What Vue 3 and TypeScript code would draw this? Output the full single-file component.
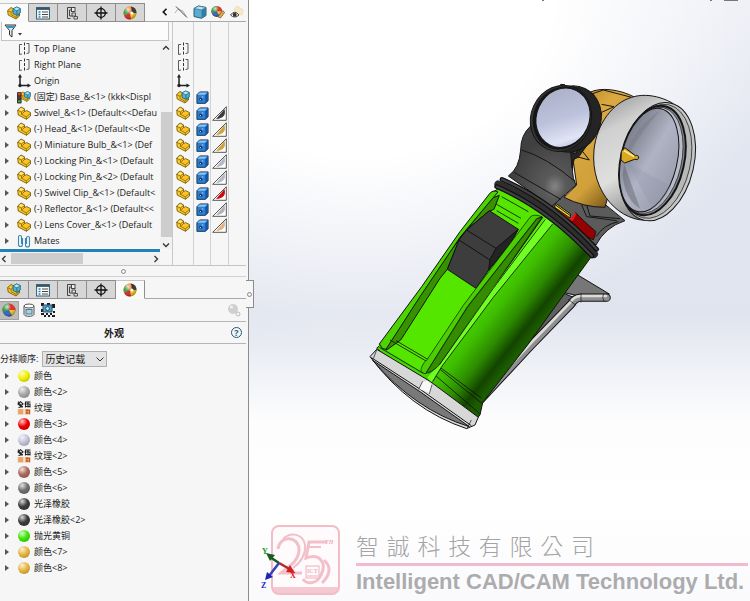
<script setup lang="ts">
import { ref } from 'vue'

interface FeatureRow {
  label: string
  icon: string
  expand: boolean
  display: string
  swatch?: string
}

interface Appearance {
  label: string
  color?: string
}

const tabs = [
  { id: 'assembly', label: 'FeatureManager' },
  { id: 'props', label: 'PropertyManager' },
  { id: 'config', label: 'ConfigurationManager' },
  { id: 'target', label: 'DimXpertManager' },
  { id: 'ball', label: 'DisplayManager' },
]

const features: FeatureRow[] = [
  { label: 'Top Plane', icon: 'plane', expand: false, display: 'plane' },
  { label: 'Right Plane', icon: 'plane', expand: false, display: 'plane' },
  { label: 'Origin', icon: 'origin', expand: false, display: 'origin' },
  { label: '(固定) Base_&<1> (kkk<Displ', icon: 'fixed', expand: true, display: 'assembly' },
  { label: 'Swivel_&<1> (Default<<Defau', icon: 'part', expand: true, display: 'part', swatch: '#3c3c3e' },
  { label: '(-) Head_&<1> (Default<<De', icon: 'part', expand: true, display: 'part', swatch: '#d0a43c' },
  { label: '(-) Miniature Bulb_&<1> (Def', icon: 'part', expand: true, display: 'part', swatch: '#d0a43c' },
  { label: '(-) Locking Pin_&<1> (Default', icon: 'part', expand: true, display: 'part', swatch: '#b9bac8' },
  { label: '(-) Locking Pin_&<2> (Default', icon: 'part', expand: true, display: 'part', swatch: '#b9bac8' },
  { label: '(-) Swivel Clip_&<1> (Default<', icon: 'part', expand: true, display: 'part', swatch: '#cf0808' },
  { label: '(-) Reflector_&<1> (Default<<', icon: 'part', expand: true, display: 'part', swatch: '#b4b4b4' },
  { label: '(-) Lens Cover_&<1> (Default', icon: 'part', expand: true, display: 'part', swatch: '#e6b484' },
  { label: 'Mates', icon: 'mates', expand: true, display: '' },
]

const appearances: Appearance[] = [
  { label: '颜色', color: '#f4f000' },
  { label: '颜色<2>', color: '#a9a9a9' },
  { label: '纹理' },
  { label: '颜色<3>', color: '#f00000' },
  { label: '颜色<4>', color: '#c3c4da' },
  { label: '纹理<2>' },
  { label: '颜色<5>', color: '#ad6a5c' },
  { label: '颜色<6>', color: '#707070' },
  { label: '光泽橡胶', color: '#3c3c3c' },
  { label: '光泽橡胶<2>', color: '#3c3c3c' },
  { label: '抛光黄铜', color: '#40e808' },
  { label: '颜色<7>', color: '#e8b640' },
  { label: '颜色<8>', color: '#e8b640' },
]

const upperTab = ref('assembly')
const lowerTab = ref('ball')
const sortOrder = ref('history')
const filterText = ref('')
</script>

<template>
  <svg class="defs" width="0" height="0" aria-hidden="true">
    <defs>
      <symbol id="part" viewBox="0 0 14 14">
        <path d="M.7 4 4 1 7.500 2.800 7.500 5.500 9.800 4.600 13.500 6.600 13.500 10 9.500 13.300 1.200 9Z" fill="#f9c624" stroke="#6b4d08" stroke-width=".8" />
        <path d="M.9 4.200 4.500 6 4.500 8.300 9.300 10.800 9.500 13.200M4.500 6 7.500 3.600M9.300 10.800 13.300 7.600M4.500 8.300 7.500 5.600" fill="none" stroke="#8a650e" stroke-width=".8" />
        <path d="M1.800 4 4 2 6.500 3.300 4.500 5Z" fill="#ffe68e" />
      </symbol>
      <symbol id="assembly" viewBox="0 0 14 14">
        <path d="M.6 4.500 4 1.500 7 3 7 7.500 12.500 8 12.500 10 9 13 1.200 9Z" fill="#f9c624" stroke="#6b4d08" stroke-width=".8" />
        <path d="M.8 4.700 4 6.300 4.200 8.700 9 11.200 9 12.800M4 6.300 6 4.600M9 11.200 12.300 8.800" fill="none" stroke="#8a650e" stroke-width=".8" />
        <path d="M6 3 9.500 1 13.300 2.600 13.300 7 9.900 9.400 6 7.500Z" fill="#4fb3d6" stroke="#155a76" stroke-width=".8" />
        <path d="M6 3 9.900 4.800 13.300 2.600 9.500 1Z" fill="#b8e9f5" stroke="#155a76" stroke-width=".6" />
        <path d="M9.900 4.800V9.300" stroke="#155a76" stroke-width=".7" />
      </symbol>
      <symbol id="fixed" viewBox="0 0 14 14">
        <use href="#assembly" x="2.500" y="0" width="11.500" height="13" />
        <rect x="0" y="2" width="4.600" height="11.500" rx="1" fill="#333" />
        <circle cx="2.300" cy="4" r="1.400" fill="#f13b26" />
        <circle cx="2.300" cy="7.600" r="1.300" fill="#7b3030" />
        <circle cx="2.300" cy="11.200" r="1.300" fill="#39aa3b" />
      </symbol>
      <symbol id="plane" viewBox="0 0 14 14">
        <path d="M5 2.500H2.500V12.500L5 12M9.500 1.500H12V11L9.500 11.500" fill="none" stroke="#5a5a5a" />
        <path d="M7.500 .5V13.500" stroke="#333" stroke-dasharray="3 1.500" />
      </symbol>
      <symbol id="origin" viewBox="0 0 14 14">
        <path d="M3 2V11.500H12" fill="none" stroke="#222" stroke-width="1.500" />
        <path d="M3 0 5 3.500H1ZM14 11.500 10.500 9.500V13.500Z" fill="#222" />
        <circle cx="3" cy="11.500" r="1.700" fill="#222" />
      </symbol>
      <symbol id="mates" viewBox="0 0 14 14">
        <path d="M5.500 4V10.500a2 2 0 0 1-4 0V3a1.500 1.500 0 0 1 3 0V10M8.500 4V11a2 2 0 0 0 4 0V4a1.500 1.500 0 0 0-3 0V10" fill="none" stroke="#3d86b0" stroke-width="1.100" />
      </symbol>
      <symbol id="props" viewBox="0 0 14 14">
        <rect x=".6" y="1.600" width="12.800" height="11.400" fill="#fff" stroke="#31586c" />
        <path d="M.6 2.800H13.400" stroke="#31586c" stroke-width="2.200" />
        <path d="M2.500 6H4.500M2.500 8.500H4.500M2.500 11H4.500" stroke="#2480a8" stroke-width="1.300" />
        <path d="M6 6H12M6 8.500H12M6 11H12" stroke="#444" />
      </symbol>
      <symbol id="config" viewBox="0 0 14 14">
        <path d="M8 1.500H2.500V12.500H5.500M4.500 4H7M4.500 4V10H8" fill="none" stroke="#444" />
        <rect x="6.500" y="1.500" width="3.500" height="4" fill="#eee" stroke="#444" />
        <path d="M7 7H10.500V10H7ZM9 10.500H12.500V13H9Z" fill="#ddd" stroke="#444" stroke-width=".9" />
      </symbol>
      <symbol id="target" viewBox="0 0 14 14">
        <circle cx="7" cy="7" r="4.300" fill="none" stroke="#111" stroke-width="1.300" />
        <path d="M7 .5V13.500M.5 7H13.500" stroke="#111" stroke-width="1.300" />
      </symbol>
      <radialGradient id="gloss" cx=".35" cy=".25" r=".75">
        <stop offset="0" stop-color="#fff" stop-opacity=".75" />
        <stop offset=".45" stop-color="#fff" stop-opacity="0" />
        <stop offset="1" stop-color="#000" stop-opacity=".3" />
      </radialGradient>
      <symbol id="ball" viewBox="0 0 14 14">
        <circle cx="7" cy="7" r="6.500" fill="#f7cf24" />
        <path d="M7 7 1 9.500A6.500 6.500 0 0 1 3 2Z" fill="#3b9f4b" />
        <path d="M3 2A6.500 6.500 0 0 1 8 .6L9 6 7 7Z" fill="#ef7a35" />
        <path d="M8 .6A6.500 6.500 0 0 1 13.500 7L11 7.500 8.500 5Z" fill="#36322f" />
        <path d="M7 7 9 5.500 11 7.500 9 9Z" fill="#fff" />
        <path d="M1 9.500 7 7 8 13.300A6.500 6.500 0 0 1 1 9.500Z" fill="#d9252b" />
        <path d="M13.500 7 11 7.500 9 9 8 13.300A6.500 6.500 0 0 0 13.500 7Z" fill="#f2c722" />
        <circle cx="7" cy="7" r="6.500" fill="url(#gloss)" />
      </symbol>
      <symbol id="ballrgb" viewBox="0 0 14 14">
        <circle cx="7" cy="7" r="6.500" fill="#e12d24" />
        <path d="M7 7 7 .5A6.500 6.500 0 0 0 1 9.500Z" fill="#2c9b49" />
        <path d="M7 7 1 9.500A6.500 6.500 0 0 0 10 12.700Z" fill="#2968c8" />
        <path d="M7 7 10 12.700A6.500 6.500 0 0 0 13.500 7Z" fill="#f0ca2c" />
        <circle cx="7" cy="7" r="6.500" fill="url(#gloss)" />
      </symbol>
      <symbol id="brush" viewBox="0 0 15 14">
        <use href="#ballrgb" width="12.500" height="12.500" />
        <path d="M7.500 12 12.500 5.500 14.700 7.500 10 13.500Z" fill="#dda75a" stroke="#6b4313" stroke-width=".7" />
      </symbol>
      <symbol id="cube" viewBox="0 0 14 14">
        <path d="M1 3.500 5.500 1 13 2.500V10.500L8.500 13.300 1 11.500Z" fill="#5badd0" stroke="#23617f" />
        <path d="M1 3.500 5.500 1 13 2.500 8.500 5Z" fill="#b5e1f0" stroke="#23617f" stroke-width=".6" />
        <path d="M8.500 5 13 2.500V10.500L8.500 13.300Z" fill="#337e9f" />
      </symbol>
      <symbol id="display" viewBox="0 0 14 14">
        <path d="M1 4 4 1H13V10.500L10 13.300H1Z" fill="#2d7ed0" stroke="#0c2e5b" />
        <path d="M1.500 4 4 1.600H12.500L10 4Z" fill="#8bc4f1" />
        <path d="M10 4 12.800 1.600V10.300L10 12.900Z" fill="#1654a1" />
        <circle cx="5" cy="9" r="1.700" fill="#0c3062" /><circle cx="4.700" cy="9.300" r=".7" fill="#d8efff" />
        <path d="M6.300 6.500H8" stroke="#c4e6ff" />
      </symbol>
      <symbol id="hidden" viewBox="0 0 14 14">
        <path d="M1 8 4 4 9 6 12 11" fill="none" stroke="#b4b4b4" />
        <path d="M2 1.500 13 12.500" stroke="#444" />
      </symbol>
      <symbol id="eye" viewBox="0 0 14 14">
        <path d="M4 5 7 1 10 3 13 5 12 10 8 9Z" fill="#f5e9c6" stroke="#e3d3a2" stroke-width=".6" />
        <path d="M.5 10Q4.500 4.500 9 10Q4.500 14 .5 10Z" fill="#fff" stroke="#4a4030" />
        <circle cx="4.700" cy="9.700" r="2" fill="#333" />
      </symbol>
      <symbol id="decal" viewBox="0 0 14 14">
        <path d="M2 3V11.500C3 14 11 14 12 11.500V3" fill="#dfe7ea" stroke="#555" />
        <ellipse cx="7" cy="3" rx="5" ry="2" fill="#fff" stroke="#555" />
        <rect x="4" y="6.500" width="6" height="4.500" fill="#a9cfe0" stroke="#4b7c93" />
      </symbol>
      <symbol id="scene" viewBox="0 0 14 14">
        <path d="M0 0H14V14H0Z" fill="#f2f2f2" />
        <path d="M0 0H3V3H0ZM6 0H9V2H6ZM11 1H14V5H11ZM0 6H2V9H0ZM0 10H3V12H0ZM3 12H5V14H3ZM5 10H7V12H5ZM7 12H9V14H7ZM9 10H11V12H9ZM11 12H14V14H11ZM12 8H14V10H12Z" fill="#1c1c1c" />
        <path d="M2 2H11V9H2Z" fill="#5c9fc4" stroke="#24536d" />
        <circle cx="6.500" cy="5.500" r="2" fill="#b8e2f4" stroke="#24536d" />
      </symbol>
      <symbol id="texture" viewBox="0 0 14 14">
        <path d="M1 3 3.500 .7 6 3 3.500 5ZM1.500 6.500 6 5.500M1 .7 5.500 6.500M8.500 .5V6.500M7.500 3H13.500M11 .5V6.500M9 1H13.500M9 5.500H13.500M13 3V6.500" fill="none" stroke="#222" stroke-width="1.100" />
        <path d="M.7 8H6.500V13.500H.7ZM7.700 8H13.500V13.500H7.700Z" fill="#efad78" />
        <path d="M9 9.500H12.500M10 8V13M9 12H12.500M12.500 9V13" stroke="#b4572b" stroke-width=".9" />
        <path d="M2 10H5.500M2 12H5.500" stroke="#dd9258" stroke-width=".8" />
      </symbol>
    </defs>
  </svg>

  <div class="app">
    <aside class="panel">
      <header class="tabbar">
        <button v-for="t in tabs" :key="t.id" type="button" class="tab" :class="{ on: upperTab === t.id }" :aria-label="t.label" @click="upperTab = t.id">
          <svg class="ic"><use :href="'#' + t.id" /></svg>
        </button>
        <div class="tools">
          <button type="button" class="tool" aria-label="Collapse display pane">
            <svg class="chev bold" viewBox="0 0 8 8"><path d="M5.500 .8 2.300 4 5.500 7.200" /></svg>
          </button>
          <button type="button" class="tool" aria-label="Hide or show"><svg class="ic"><use href="#hidden" /></svg></button>
          <button type="button" class="tool" aria-label="Display mode"><svg class="ic"><use href="#cube" /></svg></button>
          <button type="button" class="tool" aria-label="Appearance"><svg class="ic"><use href="#brush" /></svg></button>
          <button type="button" class="tool" aria-label="Transparency"><svg class="ic"><use href="#eye" /></svg></button>
        </div>
      </header>

      <section class="manager">
        <div class="left">
          <label class="filter">
            <svg class="funnel" viewBox="0 0 18 14">
              <path d="M1 1H12L8 6.500V13L5.500 11V6.500Z" fill="#d6edf5" stroke="#333" />
              <path d="M2 2H11L9.500 4H3.500Z" fill="#3c94b8" />
              <path d="M14 9H18L16 11.500Z" fill="#333" />
            </svg>
            <input v-model="filterText" type="text" aria-label="Filter" />
          </label>
          <div class="treebox">
            <ul class="tree">
              <li v-for="f in features" :key="f.label" class="row">
                <button v-if="f.expand" type="button" class="exp" aria-label="Expand"></button>
                <span v-else class="noexp"></span>
                <svg class="ic"><use :href="'#' + f.icon" /></svg>
                <span class="name">{{ f.label }}</span>
              </li>
            </ul>
            <div class="vscroll">
              <svg class="chev" viewBox="0 0 8 8"><path d="M1 5.500 4 2.500 7 5.500" /></svg>
              <span class="vthumb"></span>
              <svg class="chev" viewBox="0 0 8 8"><path d="M1 2.500 4 5.500 7 2.500" /></svg>
            </div>
          </div>
          <div class="rollback"></div>
          <div class="hscroll">
            <svg class="chev" viewBox="0 0 8 8"><path d="M5.500 1 2.500 4 5.500 7" /></svg>
            <span class="hthumb"></span>
            <svg class="chev" viewBox="0 0 8 8"><path d="M2.500 1 5.500 4 2.500 7" /></svg>
          </div>
        </div>
        <div class="pane">
          <div class="col wide">
            <div v-for="f in features" :key="f.label" class="cell">
              <svg v-if="f.display" class="ic"><use :href="'#' + f.display" /></svg>
            </div>
          </div>
          <div class="col">
            <div v-for="f in features" :key="f.label" class="cell">
              <svg v-if="f.swatch || f.display === 'assembly'" class="ic disp"><use href="#display" /></svg>
            </div>
          </div>
          <div class="col">
            <div v-for="f in features" :key="f.label" class="cell">
              <svg v-if="f.swatch" class="swatch" viewBox="0 0 15 15">
                <path d="M14 1V14H1Z" fill="#fff" />
                <path d="M12.500 3Q15 12 4 13Z" :fill="f.swatch" />
                <path d="M14.300 .7V14.300H.7Z" fill="none" stroke="#444" stroke-width=".9" />
              </svg>
            </div>
          </div>
        </div>
      </section>

      <div class="splitter"><span class="grip"></span></div>

      <nav class="tabbar lower">
        <button v-for="t in tabs" :key="t.id" type="button" class="tab" :class="{ on: lowerTab === t.id }" :aria-label="t.label" @click="lowerTab = t.id">
          <svg class="ic"><use :href="'#' + t.id" /></svg>
        </button>
      </nav>

      <div class="modes">
        <button type="button" class="mode on" aria-label="Appearances"><svg class="ic"><use href="#ballrgb" /></svg></button>
        <button type="button" class="mode" aria-label="Decals"><svg class="ic"><use href="#decal" /></svg></button>
        <button type="button" class="mode" aria-label="Scene"><svg class="ic"><use href="#scene" /></svg></button>
        <svg class="ic ghost" viewBox="0 0 14 14">
          <circle cx="6" cy="6" r="5" fill="#cfcfcf" /><circle cx="4.500" cy="4" r="1.500" fill="#f2f2f2" />
          <circle cx="11" cy="11" r="2" fill="#f6f6f6" stroke="#bbb" />
        </svg>
      </div>

      <header class="title">
        <h2>外观</h2>
        <button type="button" class="help" aria-label="Help">?</button>
      </header>

      <div class="sort">
        <label for="order">分排顺序:</label>
        <div class="selectwrap">
          <select id="order" v-model="sortOrder"><option value="history">历史记载</option></select>
          <svg class="chev" viewBox="0 0 8 8"><path d="M.5 2.500 4 6 7.500 2.500" /></svg>
        </div>
      </div>

      <ul class="looks">
        <li v-for="a in appearances" :key="a.label" class="row">
          <button type="button" class="exp" aria-label="Expand"></button>
          <span v-if="a.color" class="sphere" :style="{ backgroundColor: a.color }"></span>
          <svg v-else class="ic"><use href="#texture" /></svg>
          <span class="name">{{ a.label }}</span>
        </li>
      </ul>
      <button type="button" class="handle" aria-label="Toggle panel"><span class="grip"></span></button>
    </aside>

    <main class="view">
      <svg class="model" viewBox="249 0 501 516" role="img" aria-label="Flashlight assembly">
        <defs>
          <linearGradient id="body" gradientUnits="userSpaceOnUse" x1="385" y1="335" x2="528" y2="448">
            <stop offset="0" stop-color="#46d700" /><stop offset=".3" stop-color="#3ebd00" />
            <stop offset=".6" stop-color="#2c8b00" /><stop offset=".85" stop-color="#134400" /><stop offset="1" stop-color="#1c5c00" />
          </linearGradient>
          <linearGradient id="gold" x1="0" y1="0" x2=".6" y2="1">
            <stop offset="0" stop-color="#a9771f" /><stop offset=".35" stop-color="#dba941" /><stop offset=".75" stop-color="#d0a03b" /><stop offset="1" stop-color="#7b5918" />
          </linearGradient>
          <linearGradient id="shell" x1="0" y1="0" x2=".4" y2="1">
            <stop offset="0" stop-color="#8b8b8b" /><stop offset=".3" stop-color="#cfd0cf" /><stop offset=".65" stop-color="#dfe0de" /><stop offset="1" stop-color="#858585" />
          </linearGradient>
          <linearGradient id="bowl" x1="0" y1=".1" x2="1" y2=".7">
            <stop offset="0" stop-color="#747885" /><stop offset=".3" stop-color="#9094a3" /><stop offset=".55" stop-color="#b0b3c3" /><stop offset="1" stop-color="#9a9eaf" />
          </linearGradient>
          <linearGradient id="glass" x1="0" y1="0" x2=".8" y2="1">
            <stop offset="0" stop-color="#a7acc3" /><stop offset=".55" stop-color="#bcc2db" /><stop offset=".85" stop-color="#e0e4f6" /><stop offset="1" stop-color="#b5bbd3" />
          </linearGradient>
          <radialGradient id="neck" cx=".65" cy=".75" r=".6">
            <stop offset="0" stop-color="#858585" /><stop offset=".25" stop-color="#5a5a5a" /><stop offset="1" stop-color="#404040" />
          </radialGradient>
        </defs>
        <path d="M542 0h2v1h-2zM710 0h2v1h-2zM724 0h14v1h-14z" fill="#777" />

        <g transform="translate(360 180) scale(.3333)" stroke-linejoin="round" stroke="#111" stroke-width="3">
          <path d="M650 283 748 342 665 350 600 335Z" fill="#777" />
          <path d="M600 335 640 352 500 492 515 455Z" fill="#606060" />
          <g fill="none" stroke-linecap="round">
            <path d="M350 672 512 498 634 372Q644 354 662 353L740 353" stroke-width="25" />
            <path d="M350 672 512 498 634 372Q644 354 662 353L740 353" stroke="#8f8f8f" stroke-width="19" />
            <path d="M350 666 510 492 631 367Q642 349 662 348L738 348" stroke="#dcdcdc" stroke-width="8" />
            <path d="M625 358 648 376M663 341 663 366M730 342Q725 353 732 364" stroke-width="2" />
          </g>
          <path d="M412 28Q575 75 697 226L620 332 505 492 368 668 360 705 335 735 210 640 50 505 65 490 390 42Z" fill="url(#body)" />
          <path d="M415 26Q500 55 570 102L200 585 55 495 75 475Z" fill="#55e600" stroke="none" />
          <path d="M425 50 505 95M408 72 483 115M410 92 475 130" fill="none" stroke-width="2.500" />
          <path d="M418 46 402 88 385 95 320 150 297 182 262 268 240 295 135 460 122 480 80 510 75 495 230 265 395 55Z" fill="#379200" />
          <path d="M58 492 185 320 300 155 388 42Q398 28 414 36L402 50 300 172 180 350 78 508 68 506Z" fill="#4bd400" />
          <path d="M388 92 475 148 450 192 386 270 348 325 262 268 297 180 320 150Z" fill="#3d3d3d" />
          <path d="M475 148 450 192 386 270 390 238 408 205Z" fill="#242424" />
          <path d="M320 150 408 205M297 180 390 240" fill="none" />
          <path d="M90 480 210 550M108 482 215 545M58 502 190 580M232 556 365 655M240 568 368 672M228 588 358 700" fill="none" stroke-width="2.500" />
          <path d="M548 112 530 120 320 388 205 578 236 558 395 330Z" fill="#348c00" />
          <path d="M510 112Q520 100 546 110L530 116 322 380 196 582 183 575Q182 556 202 538L310 376Z" fill="#4ad000" stroke-width="2" />
          <path d="M546 111 530 117 322 382 198 580Q210 580 236 558L395 330Z" fill="#348c00" stroke-width="2" />
          <path d="M556 114 580 130 400 352 245 560 213 610 202 592 236 558 398 325Z" fill="#70ff20" stroke="none" />
          <path d="M578 132 400 352 245 560 218 605M556 118 400 325 238 555" fill="none" stroke-width="2.500" />
          <path d="M30 530 50 508 210 604 355 712 345 735 320 746Q150 690 30 530Z" fill="#d7d7d7" />
          <path d="M38 541 180 635 328 740Q165 690 38 541Z" fill="#797979" />
          <path d="M34 533 178 626 334 737" fill="none" />
          <path d="M50 510 40 536M334 720 322 744" fill="none" stroke-width="2" />
          <path d="M186 606 202 602 216 615 212 640 178 627Z" fill="#f8f8f8" stroke="none" />
          <path d="M188 604 176 628M216 614 208 642" stroke-width="2" />
        </g>

        <g transform="translate(490 70) scale(.3333)" stroke-linejoin="round" stroke="#151515" stroke-width="3">
          <path d="M220 375 335 395 405 452Q345 472 318 525L180 410Z" fill="#5b5b5b" />
          <path d="M275 405 290 440 380 452M290 405 300 438 390 446M318 500Q340 465 385 455" fill="none" />
          <path d="M188 412 245 452 257 428Q275 448 318 485L310 510 250 478Z" fill="#950000" />
          <path d="M190 414 246 450 257 430" fill="none" stroke="#f21515" stroke-width="6" />
          <path d="M197 400 242 432 240 444 194 412Z" fill="#e5d526" />
          <path d="M198 406 240 436" />
          <path d="M298 68C330 50 390 58 435 82L345 412Q280 412 222 382L260 345 248 260 335 135Z" fill="url(#gold)" />
          <path d="M335 103 372 110 335 127M305 72 340 60 425 82M268 232 298 270 252 258" fill="none" />
          <path d="M425 82C475 65 548 85 590 135L480 450C395 460 300 370 312 240C320 160 370 98 425 82Z" fill="url(#shell)" />
          <g transform="rotate(13 502 275)">
            <ellipse cx="502" cy="275" rx="110" ry="180" fill="#c5c6c5" />
            <ellipse cx="497" cy="275" rx="104" ry="174" fill="#b7b8b8" stroke-width="2" />
            <ellipse cx="487" cy="275" rx="95" ry="167" fill="#858992" stroke-width="6" />
            <ellipse cx="484" cy="275" rx="90" ry="162" fill="#babdc9" stroke-width="2" />
            <ellipse cx="477" cy="276" rx="84" ry="158" fill="url(#bowl)" />
          </g>
          <path d="M410 245Q435 170 510 122Q450 190 420 247Z" fill="#6f7380" opacity=".35" stroke="none" />
          <path d="M402 282 450 415Q405 390 398 315Z" fill="#5d616c" opacity=".45" stroke="none" />
          <path d="M410 276 545 350Q525 395 490 420Z" fill="#8c90a2" opacity=".25" stroke="none" />
          <path d="M394 244 405 233 436 257Q446 254 446 264Q444 272 434 268L404 279 393 270Z" fill="#d9a91f" />
          <path d="M402 242 432 260" stroke="#fff1a0" stroke-width="5" />
          <path d="M122 168Q92 195 92 240Q88 295 55 318L185 410 220 378 258 346Q238 305 255 260L270 235Z" fill="url(#neck)" />
          <path d="M95 240Q170 262 256 335M72 307 212 388" fill="none" />
          <path d="M242 246 258 252 262 240 335 130 310 200 265 262 250 268 246 295Z" fill="#252525" />
          <ellipse cx="242" cy="147" rx="90" ry="101" transform="rotate(25 242 147)" fill="#242424" />
          <ellipse cx="213" cy="145" rx="90" ry="101" transform="rotate(25 213 145)" fill="#353535" />
          <ellipse cx="215" cy="144" rx="83" ry="95" transform="rotate(25 215 144)" fill="#161616" />
          <ellipse cx="219" cy="143" rx="79" ry="91" transform="rotate(25 219 143)" fill="url(#glass)" />
          <path d="M210 48 212 43 225 44" fill="none" />
          <g fill="none" stroke-linecap="round">
            <path d="M25 343Q175 405 312 552" stroke="#2e2e2e" stroke-width="24" />
            <path d="M36 328Q190 395 320 538" stroke="#0c0c0c" stroke-width="14" />
            <path d="M36 328Q190 395 320 538" stroke="#404040" stroke-width="7" />
            <path d="M20 350Q170 414 306 558" stroke="#0c0c0c" stroke-width="14" />
            <path d="M20 350Q170 414 306 558" stroke="#404040" stroke-width="7" />
          </g>
        </g>
      </svg>

      <footer class="brand">
        <svg class="logo" viewBox="0 0 69 70" role="img" aria-label="ICT 25th">
          <rect x="1" y="1" width="67" height="68" rx="7" fill="#fffafb" stroke="#f2bdc7" stroke-width="2" />
          <path d="M2 62H67V65Q65 69 60 69H9Q4 69 2 65Z" fill="#f2bdc7" opacity=".8" />
          <g fill="none" stroke="#f2c0ca">
            <path d="M7 24C9 9 29 11 28 26C27 37 17 42 10 48H31" stroke-width="3" />
            <path d="M12 14C20 6 32 9 34 20C35 30 30 37 22 43" stroke-width="2" />
            <path d="M56 17H38L35 33C49 28 56 38 50 50C46 59 36 60 32 54" stroke-width="3" />
            <path d="M53 35Q64 45 51 58" stroke-width="3" />
            <path d="M36 22H50" stroke-width="2" />
          </g>
          <rect x="35" y="41" width="13" height="12" fill="#fffafb" stroke="#eeb0bd" />
          <path d="M36 51H47" stroke="#eeb0bd" />
          <text x="36" y="48" class="ict">ICT</text>
          <text x="54" y="19" class="th">TH</text>
        </svg>
        <div class="words">
          <p class="zh">智誠科技有限公司</p>
          <hr />
          <p class="en">Intelligent CAD/CAM Technology Ltd.</p>
        </div>
        <svg class="triad" viewBox="0 0 40 44" aria-hidden="true">
          <path d="M18 17 32 25" stroke="#b52a2a" stroke-width="2.500" /><path d="M29 19 34 27 25 26Z" fill="#c22" />
          <path d="M18 17 9 11" stroke="#165c20" stroke-width="2.500" /><path d="M5 7 14 9 9 15Z" fill="#175d1d" />
          <path d="M18 17 8 30" stroke="#3740bb" stroke-width="2.500" /><path d="M4 34 6 26 12 31Z" fill="#1c24b0" />
          <text x="1" y="8" fill="#129a22">Y</text><text x="29" y="32" fill="#e01818">X</text><text x="0" y="42" fill="#1c24d0">Z</text>
        </svg>
      </footer>
    </main>
  </div>
</template>

<style>
body { margin: 0; overflow: hidden; }
</style>

<style scoped>
* { box-sizing: border-box; }
ul, p, h2 { margin: 0; padding: 0; list-style: none; }
button { margin: 0; padding: 0; border: 0; background: none; color: inherit; font: inherit; }
.defs { display: block; }
.app {
  display: flex;
  min-height: 100vh;
  color: #1a1a1a;
  font: 9px/16px "Open Sans", "Noto Sans CJK SC", sans-serif;
}
.panel {
  position: relative;
  display: flex;
  flex: none;
  flex-direction: column;
  width: 249px;
  padding-right: 2px;
  border-right: 1px solid #8c8c8c;
  background: #f6f6f6;
}
.ic { display: block; flex: none; width: 14px; height: 14px; }
.chev { display: block; flex: none; width: 8px; height: 8px; fill: none; stroke: #333; stroke-width: 1.3; }
.chev.bold { stroke: #111; stroke-width: 1.6; }

.tabbar { display: flex; height: 22px; padding-top: 3px; }
.tab {
  display: flex;
  align-items: center;
  justify-content: center;
  width: 29px;
  border: solid #8e8e8e;
  border-width: 1px 1px 1px 0;
  background: #d6d6d6;
}
.tab.on { border-top-color: #c4c4c4; border-bottom-color: transparent; background: #fafafa; }
.tools { display: flex; flex: 1; align-items: center; justify-content: space-between; padding: 0 2px 0 16px; border-bottom: 1px solid #a8a8a8; }
.lower::after { content: ""; flex: 1; border-bottom: 1px solid #a8a8a8; }

.manager { display: flex; border-bottom: 1px solid #c4c4c4; }
.left { display: flex; flex: none; flex-direction: column; width: 172px; }
.filter { display: flex; align-items: center; height: 19px; margin: 0 3px 0 1px; padding-left: 2px; border: 1px solid #c4c4c4; border-top: 0; background: #fcfcfc; }
.funnel { flex: none; width: 18px; height: 14px; }
.filter input { flex: 1; min-width: 0; height: 16px; padding: 0; border: 0; outline: 0; background: transparent; font: inherit; }
.treebox { display: flex; }
.tree { flex: 1; min-width: 0; overflow: hidden; }
.row { display: flex; align-items: center; height: 16px; white-space: nowrap; }
.exp { flex: none; width: 4px; height: 6px; margin: 0 13px 0 5px; background: #555; clip-path: polygon(0 0, 100% 50%, 0 100%); }
.noexp { flex: none; width: 22px; }
.row .ic { margin-left: -5px; margin-right: 3px; }
.vscroll { display: flex; flex: none; flex-direction: column; align-items: center; width: 12px; padding: 3px 0 0; background: #f1f1f1; }
.vthumb { width: 11px; flex: 1; margin: 60px 0 4px; background: #cdcdcd; }
.rollback { width: 160px; height: 3px; background: #2581b5; }
.hscroll { display: flex; align-items: center; width: 160px; height: 13px; background: #f1f1f1; }
.hthumb { width: 72px; height: 11px; margin: 0 auto 0 3px; background: #cdcdcd; }
.pane { display: flex; flex: 1; border-left: 1px solid #c9c9c9; }
.col { width: 17px; padding-top: 19px; border-right: 1px solid #d2d2d2; }
.col.wide { width: 21px; }
.col:last-child { width: 18px; }
.cell { display: flex; align-items: center; justify-content: center; height: 16px; }
.disp { width: 13px; height: 13px; }
.swatch { flex: none; width: 15px; height: 15px; }

.splitter { display: flex; align-items: center; justify-content: center; height: 11px; border-bottom: 1px solid #d0d0d0; }
.grip { width: 5px; height: 5px; border: 1px solid #888; border-radius: 50%; }

.modes { display: flex; align-items: center; height: 23px; border-bottom: 1px solid #b5b5b5; }
.mode { display: flex; align-items: center; justify-content: center; width: 19px; height: 19px; }
.mode.on { background: #bcbcbc; border: 1px solid #a0a0a0; border-left: 0; }
.ghost { margin-left: auto; margin-right: 5px; }
.title { display: grid; grid-template-columns: 1fr 14px; align-items: center; height: 22px; padding-right: 4px; border-bottom: 1px solid #b5b5b5; }
.title h2 { font-size: 10px; line-height: 16px; text-align: center; }
.title .help { justify-self: end; width: 11px; height: 11px; border: 1px solid #27566d; border-radius: 50%; color: #17678b; font-size: 9px; font-weight: 700; line-height: 9px; }
.sort { display: flex; align-items: center; gap: 4px; padding: 7px 0 1px; }
.selectwrap { position: relative; width: 65px; height: 16px; }
.selectwrap select {
  width: 100%;
  height: 16px;
  padding: 0 0 0 2px;
  appearance: none;
  border: 1px solid #b0b0b0;
  border-radius: 0;
  background: #e3e3e3;
  color: inherit;
  font-family: inherit;
  font-size: 10px;
  line-height: 14px;
}
.selectwrap .chev { position: absolute; top: 4px; right: 3px; stroke-width: 1; }
.sphere {
  flex: none;
  width: 12px;
  height: 12px;
  margin: 0 4px 0 -4px;
  border-radius: 50%;
  background-image: radial-gradient(circle at 35% 28%, rgba(255, 255, 255, .8) 0, rgba(255, 255, 255, 0) 45%, rgba(0, 0, 0, .3) 100%);
}
.handle {
  position: absolute;
  top: 280px;
  right: -6px;
  display: flex;
  align-items: center;
  justify-content: center;
  width: 8px;
  height: 28px;
  border: 1px solid #8c8c8c;
  border-left: 0;
  background: #f6f6f6;
}

.view {
  display: flex;
  flex: 1;
  flex-direction: column;
  min-width: 0;
  overflow: hidden;
  background:
    radial-gradient(ellipse 85% 58% at 22% 0, #fff 0, #fff 45%, rgba(255, 255, 255, 0) 100%),
    linear-gradient(#eceef5 0, #e2e6f0 25%, #e0e4ee 52%, #fdfdfe 70%, #fff 85%, #fafafd 100%);
}
.model { display: block; width: 100%; height: auto; }
.brand { position: relative; display: flex; gap: 16px; padding: 9px 2px 0 22px; }
.logo { flex: none; width: 69px; height: 70px; }
.ict { fill: #eeb0bd; font: 700 6px "Liberation Serif", serif; }
.th { fill: #eeb0bd; font: italic 700 6px "Liberation Serif", serif; }
.words { flex: 1; min-width: 0; padding-top: 5px; white-space: nowrap; }
.zh { width: 238px; color: #a4a4a4; font: 300 23px/30px "Noto Sans CJK TC", sans-serif; text-align: justify; text-align-last: justify; }
.words hr { height: 3px; margin: 3px 0 2px; border: 0; background: #f0bccb; }
.en { color: #acacae; font: 700 22px/28px "Liberation Sans", sans-serif; }
.triad { position: absolute; top: 30px; left: 12px; width: 40px; height: 44px; }
.triad text { font: 700 8px "Liberation Serif", serif; }
</style>
